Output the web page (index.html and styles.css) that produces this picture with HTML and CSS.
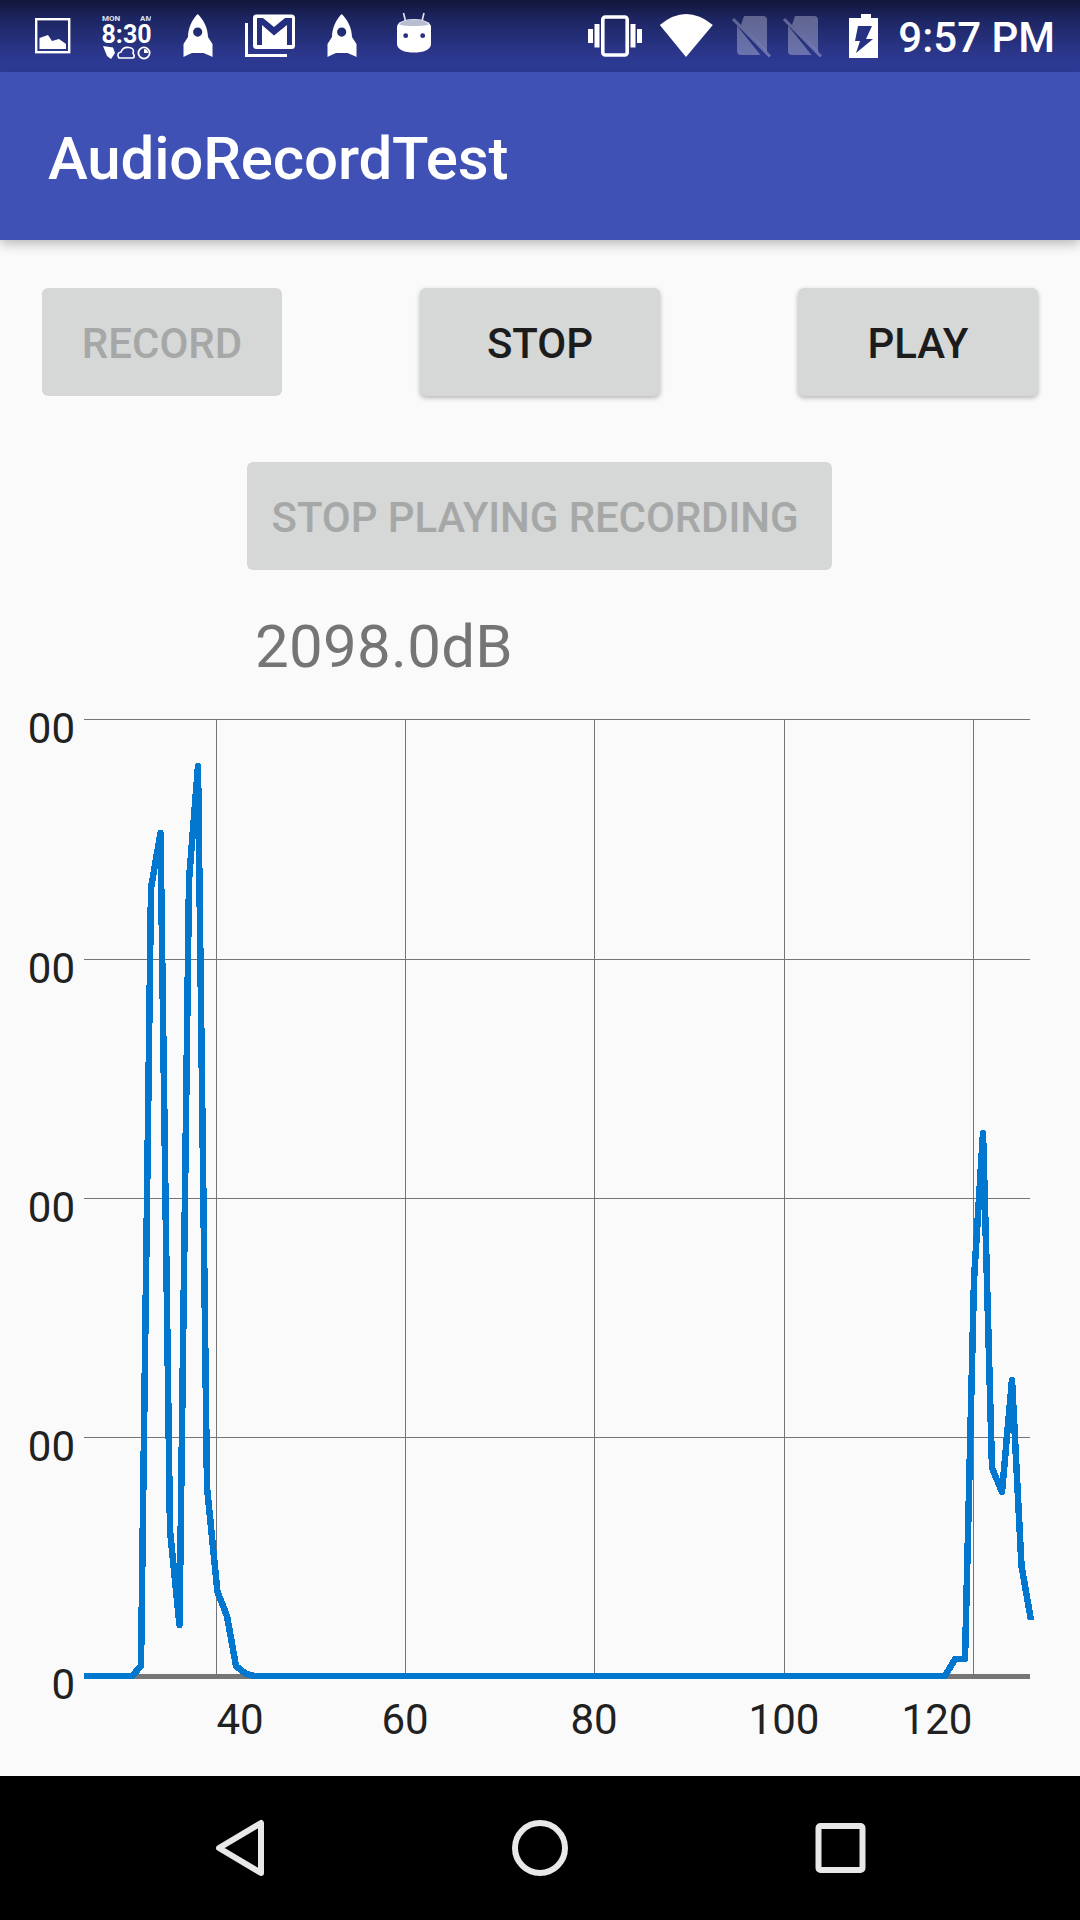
FILE: index.html
```html
<!DOCTYPE html>
<html lang="en">

<head>
    <meta charset="UTF-8">
    <meta name="viewport" content="width=device-width, initial-scale=1.0">
    <title>AudioRecordTest</title>
    <link rel="stylesheet" href="styles.css">
</head>

<body>
    <div class="screen">
        <header class="status-bar">
            <div class="status-left">
                <svg class="icon" width="36" height="72" viewBox="0 0 36 72">
                    <rect x="1.2" y="19.2" width="33" height="33" fill="none" stroke="#fff" stroke-width="2.4" />
                    <path d="M4.5 38 L13 35 L17 41 L24 39 L31 44 V49 H4.5 Z" fill="#fff" />
                </svg>
                <svg class="icon clock-icon" width="50" height="72" viewBox="0 0 50 72">
                    <text class="lcd-small" x="1" y="21">MON</text>
                    <text class="lcd-small" x="39" y="21">AM</text>
                    <text class="lcd" x="0.5" y="43">8:30</text>
                    <path d="M2 46 L12 47.5 L14 53 L10 59 L6 56 Z" fill="#fff" />
                    <path d="M18 58 Q15 53 20 52 Q22 46.5 28 47.5 Q34 48.5 32 53 Q35 58 31 58 Z" fill="none" stroke="#fff" stroke-width="1.6" />
                    <circle cx="43" cy="53" r="5.6" fill="none" stroke="#fff" stroke-width="1.8" />
                    <path d="M43 49 V53 H47 A4 4 0 0 0 43 49 Z" fill="#fff" />
                </svg>
                <svg class="icon rocket-icon" width="30" height="72" viewBox="0 0 30 72">
                    <path fill-rule="evenodd" d="M14.7 14 C9.5 19 5 28 5 37 L0.5 44 V57 C3 56 6 54 9 53 H20.5 C23.5 54 27 56 29.5 57 V44 L25 37 C25 28 20 19 14.7 14 Z M14.7 27.5 A4.6 4.6 0 1 0 14.7 36.7 A4.6 4.6 0 1 0 14.7 27.5 Z" fill="#fff" />
                </svg>
                <svg class="icon mail-icon" width="50" height="72" viewBox="245 0 50 72">
                    <path d="M246.5 23 V55.5 H287" fill="none" stroke="#fff" stroke-width="3" />
                    <rect x="253" y="14.5" width="42" height="34.5" rx="3.5" fill="#fff" />
                    <path d="M257 18 H263 L274 27 L285 18 H292 V45 H287 V25 L274 35.5 L262 25 V45 H257 Z" fill="#252f7f" />
                </svg>
                <svg class="icon rocket-icon-next" width="30" height="72" viewBox="0 0 30 72">
                    <path fill-rule="evenodd" d="M14.7 14 C9.5 19 5 28 5 37 L0.5 44 V57 C3 56 6 54 9 53 H20.5 C23.5 54 27 56 29.5 57 V44 L25 37 C25 28 20 19 14.7 14 Z M14.7 27.5 A4.6 4.6 0 1 0 14.7 36.7 A4.6 4.6 0 1 0 14.7 27.5 Z" fill="#fff" />
                </svg>
                <svg class="icon android-icon" width="34" height="72" viewBox="397 0 34 72">
                    <path d="M403.5 13 L405.5 21 M424 13 L422 21" stroke="#e4e6f0" stroke-width="1.6" fill="none" />
                    <path d="M397 27 C397 22 405 19 414 19 C423 19 431 22 431 27 V44 C431 50 423 52.5 414 52.5 C405 52.5 397 50 397 44 Z" fill="#fff" />
                    <path d="M399 24.5 C402 20.5 408 19.5 414 19.5 C420 19.5 426 20.5 429 24.5 C424 26.5 404 26.5 399 24.5 Z" fill="#b9bdd2" />
                    <circle cx="405.7" cy="35.7" r="2.4" fill="#252f7f" />
                    <circle cx="422.7" cy="35.7" r="2.4" fill="#252f7f" />
                </svg>
            </div>
            <div class="status-right">
                <svg class="icon" width="54" height="72" viewBox="588 0 54 72">
                    <path d="M588 29 h5 v14 h-5 Z M594.5 24 h5 v23.5 h-5 Z M630.5 24 h5 v23.5 h-5 Z M637 29 h5 v14 h-5 Z" fill="#fff" />
                    <rect x="602.8" y="17" width="24.4" height="38" rx="2.5" fill="none" stroke="#fff" stroke-width="3.6" />
                </svg>
                <svg class="icon wifi-icon" width="54" height="72" viewBox="659 0 54 72">
                    <path d="M659.8 25 Q686 3 712.8 25 L686 57 Z" fill="#fff" />
                </svg>
                <svg class="icon sim-icon" width="40" height="72" viewBox="731 0 40 72">
                    <path d="M744 16 H763 Q767 16 767 20 V52 L741 25 Z M737 25.5 L760.5 55 H741 Q737 55 737 51 Z" fill="#fff" fill-opacity="0.3" />
                    <path d="M733 19 L770 56.5" stroke="#fff" stroke-opacity="0.3" stroke-width="3" fill="none" />
                </svg>
                <svg class="icon sim-icon-next" width="40" height="72" viewBox="731 0 40 72">
                    <path d="M744 16 H763 Q767 16 767 20 V52 L741 25 Z M737 25.5 L760.5 55 H741 Q737 55 737 51 Z" fill="#fff" fill-opacity="0.3" />
                    <path d="M733 19 L770 56.5" stroke="#fff" stroke-opacity="0.3" stroke-width="3" fill="none" />
                </svg>
                <svg class="icon battery-icon" width="29" height="72" viewBox="849 0 29 72">
                    <path d="M861 14 H871 V18 H878 V58 H849 V18 H861 Z" fill="#fff" />
                    <path d="M858 26 H872 L866 39 H873 L856 53 L860 41 H855 Z" fill="#263184" />
                </svg>
                <span class="clock">9:57 PM</span>
            </div>
        </header>

        <div class="app-bar">AudioRecordTest</div>

        <main class="content">
            <div class="button-row">
                <button class="btn" disabled>RECORD</button>
                <button class="btn">STOP</button>
                <button class="btn">PLAY</button>
            </div>
            <div class="button-row center">
                <button class="btn wide" disabled>STOP PLAYING RECORDING</button>
            </div>
            <p class="level">2098.0dB</p>

            <!-- viewBox starts at y=681 so coordinates match the screen -->
            <svg class="chart" width="1080" height="1095" viewBox="0 681 1080 1095">
                <g class="grid">
                    <line x1="84" y1="719.5" x2="1030" y2="719.5" />
                    <line x1="84" y1="959.5" x2="1030" y2="959.5" />
                    <line x1="84" y1="1198.5" x2="1030" y2="1198.5" />
                    <line x1="84" y1="1437.5" x2="1030" y2="1437.5" />
                    <line x1="216.5" y1="719" x2="216.5" y2="1676" />
                    <line x1="405.5" y1="719" x2="405.5" y2="1676" />
                    <line x1="594.5" y1="719" x2="594.5" y2="1676" />
                    <line x1="784.5" y1="719" x2="784.5" y2="1676" />
                    <line x1="973.5" y1="719" x2="973.5" y2="1676" />
                </g>
                <line class="axis" x1="84" y1="1676.5" x2="1030" y2="1676.5" />
                <g class="tick y-tick">
                    <text x="75" y="743">00</text>
                    <text x="75" y="983">00</text>
                    <text x="75" y="1222">00</text>
                    <text x="75" y="1461">00</text>
                    <text x="75" y="1699">0</text>
                </g>
                <g class="tick x-tick">
                    <text x="240" y="1734">40</text>
                    <text x="405" y="1734">60</text>
                    <text x="594" y="1734">80</text>
                    <text x="784" y="1734">100</text>
                    <text x="937" y="1734">120</text>
                </g>
                <polyline class="trace" points="84,1676 132,1676 141,1666 151,888 160.5,833 170,1530 179.5,1625 189,880 198,766 207,1487 217.5,1592 227,1616 236,1666 246,1674 255,1676 945,1676 955,1659 965,1659 974,1280 983,1133 992,1468 1002,1492 1012,1380 1021.5,1566 1031,1620" />
            </svg>
        </main>

        <nav class="nav-bar">
            <svg width="1080" height="144" viewBox="0 1776 1080 144">
                <path class="nav-icon" d="M261 1823 V1873 L219 1848 Z" />
                <circle class="nav-icon" cx="540" cy="1848" r="25" />
                <rect class="nav-icon" x="818.5" y="1826" width="44" height="44" rx="2" />
            </svg>
        </nav>
    </div>
</body>

</html>
```

FILE: styles.css
```css
* {
    box-sizing: border-box;
}

body {
    margin: 0;
    font-family: Roboto, "Liberation Sans", sans-serif;
    background-color: #000;
}

.screen {
    width: 1080px;
    height: 1920px;
    display: flex;
    flex-direction: column;
    overflow: hidden;
}

.status-bar {
    height: 72px;
    flex: none;
    display: flex;
    justify-content: space-between;
    background: linear-gradient(#11163a, #1c2560 25%, #2a3588 70%, #303e9c);
    color: #fff;
}

.status-left,
.status-right {
    display: flex;
    align-items: flex-start;
}

.status-left {
    padding-left: 35px;
}

.status-right {
    padding-right: 25px;
}

.icon {
    display: block;
    flex: none;
}

.clock-icon {
    margin-left: 30px;
}

.rocket-icon {
    margin-left: 32px;
}

.mail-icon {
    margin-left: 32px;
}

.rocket-icon-next {
    margin-left: 32px;
}

.android-icon {
    margin-left: 40px;
}

.wifi-icon {
    margin-left: 17px;
}

.sim-icon {
    margin-left: 18px;
}

.sim-icon-next {
    margin-left: 11px;
}

.battery-icon {
    margin-left: 27px;
}

.lcd,
.lcd-small {
    font-family: Roboto, sans-serif;
    font-weight: 700;
    fill: #fff;
}

.lcd {
    font-size: 25px;
}

.lcd-small {
    font-size: 8px;
    fill: #dfe2ee;
}

.clock {
    margin-left: 20px;
    font-size: 42px;
    font-weight: 500;
    line-height: 76px;
}

.app-bar {
    height: 168px;
    flex: none;
    padding: 5px 48px 0;
    display: flex;
    align-items: center;
    position: relative;
    z-index: 1;
    background-color: #3f51b5;
    color: #fff;
    font-size: 60px;
    font-weight: 500;
    line-height: 1;
    letter-spacing: -0.15px;
    box-shadow: 0 3px 12px rgba(0, 0, 0, 0.3);
}

.content {
    flex: 1;
    min-height: 0;
    background-color: #fafafa;
}

.button-row {
    display: flex;
    justify-content: space-between;
    padding: 48px 42px 0;
}

.button-row.center {
    justify-content: center;
    padding-top: 66px;
}

.btn {
    width: 240px;
    height: 108px;
    border: 0;
    border-radius: 6px;
    padding: 3px 0 0;
    font-family: inherit;
    font-size: 42px;
    font-weight: 500;
    color: #1c1c1c;
    background-color: #d6d7d7;
    box-shadow: 0 2px 5px rgba(0, 0, 0, 0.28);
}

.btn:disabled {
    color: #a6a8a8;
    box-shadow: none;
}

.btn.wide {
    width: 585px;
    margin-left: -1px;
    padding-right: 9px;
    letter-spacing: -0.1px;
}

.level {
    margin: 42px 0 0 255px;
    height: 69px;
    font-size: 60px;
    line-height: 70px;
    letter-spacing: 0.3px;
    color: #757575;
}

.chart {
    display: block;
}

.grid line {
    stroke: #757575;
    stroke-width: 1;
}

.axis {
    stroke: #757575;
    stroke-width: 5;
}

.tick text {
    font-size: 42px;
    fill: #212121;
}

.y-tick text {
    text-anchor: end;
}

.x-tick text {
    text-anchor: middle;
}

.trace {
    fill: none;
    stroke: #0277d0;
    stroke-width: 6.5;
    stroke-linejoin: round;
    shape-rendering: crispEdges;
}

.nav-bar {
    height: 144px;
    flex: none;
    background-color: #000;
}

.nav-bar svg {
    display: block;
}

.nav-icon {
    fill: none;
    stroke: #e8e8e8;
    stroke-width: 6;
    stroke-linejoin: round;
}
```
